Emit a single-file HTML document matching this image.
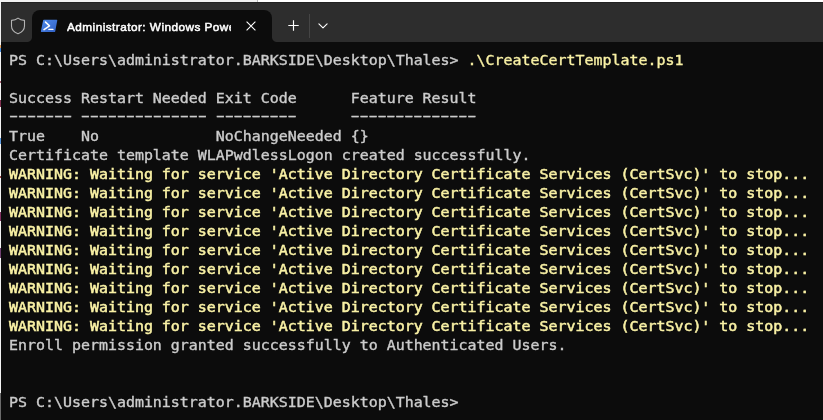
<!DOCTYPE html>
<html>
<head>
<meta charset="utf-8">
<title>Administrator: Windows PowerShell</title>
<style>
html,body{margin:0;padding:0;}
body{width:823px;height:420px;overflow:hidden;background:#0c0c0c;position:relative;font-family:"Liberation Mono",monospace;}
#topstrip{position:absolute;left:0;top:0;width:823px;height:2px;background:#ffffff;}
#topstrip .l{position:absolute;left:0;top:0;width:257px;height:2px;background:#f0f0f0;}
#topstrip .v{position:absolute;left:257px;top:0;width:1px;height:2px;background:#b8b8b8;}
#leftcol{position:absolute;left:0;top:0;width:1px;height:420px;background:linear-gradient(to bottom,#f2f2f2 0px,#f2f2f2 45px,#e0a060 45px,#e0a060 48px,#4a90e0 48px,#4a90e0 52px,#f4f4f4 52px,#f4f4f4 81px,#a86070 81px,#a86070 83px,#f4f4f4 83px,#f4f4f4 100px,#803050 100px,#803050 107px,#f4f4f4 107px,#f4f4f4 138px,#5a9ae0 138px,#5a9ae0 144px,#f4f4f4 144px,#f4f4f4 176px,#a04848 176px,#a04848 178px,#f4f4f4 178px,#f4f4f4 212px,#803060 212px,#803060 221px,#f4f4f4 221px,#f4f4f4 248px,#704070 248px,#704070 258px,#f4f4f4 258px,#f4f4f4 393px,#6a6a6a 393px,#6a6a6a 420px);}
#titlebar{position:absolute;left:1px;top:2px;width:822px;height:40px;background:#2d2d2d;border-top:1px solid #222;box-sizing:border-box;}
#tab{position:absolute;left:32px;top:10px;width:240px;height:32px;background:#0c0c0c;border-radius:8px 8px 0 0;}
#tab:before{content:"";position:absolute;left:-5px;bottom:0;width:5px;height:5px;background:radial-gradient(circle at 0 0,rgba(12,12,12,0) 4.5px,#0c0c0c 5.5px);}
#tab:after{content:"";position:absolute;right:-5px;bottom:0;width:5px;height:5px;background:radial-gradient(circle at 100% 0,rgba(12,12,12,0) 4.5px,#0c0c0c 5.5px);}
#title{will-change:transform;position:absolute;left:67px;top:18px;width:164px;height:18px;line-height:18px;overflow:hidden;white-space:nowrap;color:#fff;font-family:"Liberation Sans",sans-serif;font-weight:normal;font-size:11.8px;letter-spacing:0.45px;-webkit-text-stroke:0.5px #fff;}
svg{position:absolute;overflow:visible;}
#sep{position:absolute;left:309px;top:14px;width:1px;height:24px;background:#454545;}
#term{-webkit-text-stroke:0.35px #cccccc;position:absolute;left:9px;top:51px;margin:0;font-family:"DejaVu Sans Mono","Liberation Mono",monospace;font-size:13.7px;transform:scaleX(1.09116);transform-origin:0 0;will-change:transform;line-height:19px;color:#cccccc;white-space:pre;}
#term .y{color:#f9f1a5;-webkit-text-stroke:0.35px #f9f1a5;}
#term .d{display:inline-block;transform:scaleX(1.745);transform-origin:0 0;letter-spacing:-3.5214px;position:relative;top:-1px;left:-3.5px;}
#term .w{color:#f9f1a5;font-weight:normal;-webkit-text-stroke:0.5px #f9f1a5;}
</style>
</head>
<body>
<div id="titlebar"></div>
<div id="topstrip"><div class="l"></div><div class="v"></div></div>
<div id="leftcol"></div>
<div id="tab"></div>
<svg id="shield" style="left:10px;top:17px" width="16" height="18" viewBox="0 0 16 18"><path d="M8 1.1 C9.8 2.5 12 3.2 14.5 3.4 V9 C14.5 12.6 11.9 15.2 8 16.8 C4.1 15.2 1.5 12.6 1.5 9 V3.4 C4 3.2 6.2 2.5 8 1.1 Z" fill="none" stroke="#b4b4b4" stroke-width="1.1" stroke-linejoin="round"/></svg>
<svg id="psicon" style="left:40px;top:19px" width="18" height="14" viewBox="0 0 18 14"><defs><linearGradient id="pg" x1="0" y1="0" x2="1" y2="1"><stop offset="0" stop-color="#4f8cee"/><stop offset="1" stop-color="#3160c4"/></linearGradient></defs><path d="M3.9 0.8 H16.7 Q17.4 0.8 17.25 1.45 L15.2 12.4 Q15.05 13 14.4 13 H1.5 Q0.75 13 0.9 12.35 L3.1 1.4 Q3.25 0.8 3.9 0.8 Z" fill="url(#pg)"/><path d="M5.5 3.1 L9.5 6.9 L4 10.6" fill="none" stroke="#fff" stroke-width="1.5" stroke-linecap="round" stroke-linejoin="round"/><path d="M8.9 10.4 H12.9" stroke="#fff" stroke-width="1.4" stroke-linecap="round"/></svg>
<div id="title">Administrator: Windows PowerShell</div>
<svg id="close" style="left:246px;top:21px" width="10" height="10" viewBox="0 0 10 10"><path d="M0.6 0.6 L9.4 9.4 M9.4 0.6 L0.6 9.4" stroke="#fff" stroke-width="1.1" fill="none"/></svg>
<svg id="plus" style="left:288px;top:20px" width="11" height="11" viewBox="0 0 11 11"><path d="M5.5 0.3 V10.7 M0.3 5.5 H10.7" stroke="#fff" stroke-width="1.15" fill="none"/></svg>
<div id="sep"></div>
<svg id="chev" style="left:318px;top:23px" width="10" height="6" viewBox="0 0 10 6"><path d="M0.9 0.8 L5 4.9 L9.1 0.8" stroke="#fff" stroke-width="1.1" fill="none" stroke-linecap="round" stroke-linejoin="round"/></svg>
<pre id="term">PS C:\Users\administrator.BARKSIDE\Desktop\Thales&gt; <span class="y">.\CreateCertTemplate.ps1</span>

Success Restart Needed Exit Code      Feature Result
<span class="d">------- -------------- ---------      --------------</span>
True    No             NoChangeNeeded {}
Certificate template WLAPwdlessLogon created successfully.
<span class="w">WARNING: Waiting for service 'Active Directory Certificate Services (CertSvc)' to stop...
WARNING: Waiting for service 'Active Directory Certificate Services (CertSvc)' to stop...
WARNING: Waiting for service 'Active Directory Certificate Services (CertSvc)' to stop...
WARNING: Waiting for service 'Active Directory Certificate Services (CertSvc)' to stop...
WARNING: Waiting for service 'Active Directory Certificate Services (CertSvc)' to stop...
WARNING: Waiting for service 'Active Directory Certificate Services (CertSvc)' to stop...
WARNING: Waiting for service 'Active Directory Certificate Services (CertSvc)' to stop...
WARNING: Waiting for service 'Active Directory Certificate Services (CertSvc)' to stop...
WARNING: Waiting for service 'Active Directory Certificate Services (CertSvc)' to stop...</span>
Enroll permission granted successfully to Authenticated Users.


PS C:\Users\administrator.BARKSIDE\Desktop\Thales&gt;
</pre>
</body>
</html>
